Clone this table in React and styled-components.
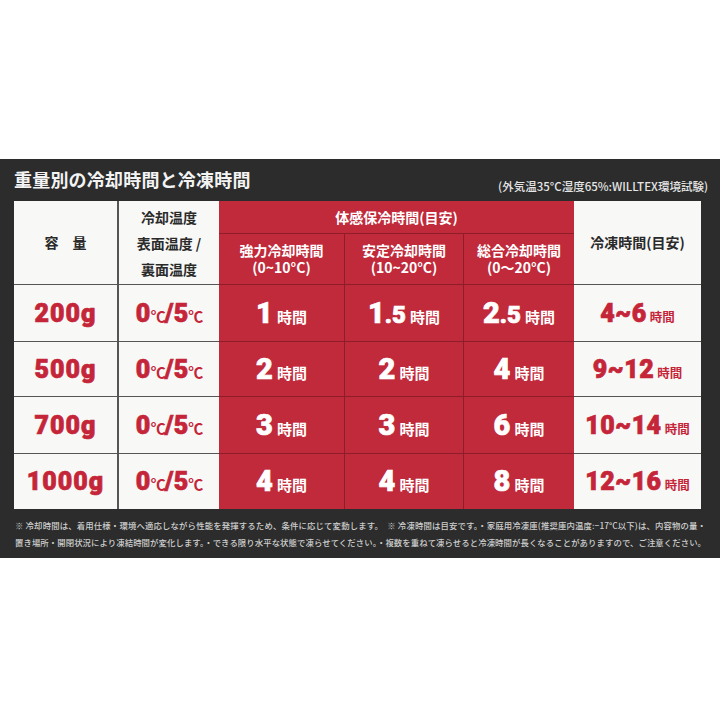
import styled, { createGlobalStyle } from 'styled-components';

const GlobalStyle = createGlobalStyle`
  html, body {
    margin: 0;
    padding: 0;
    background: #ffffff;
  }
  body {
    font-family: 'Noto Sans CJK JP', 'Noto Sans', sans-serif;
  }
`;

const RED = '#c02a3b';
const RED_LINE = '#8e1d2a';
const GRAY_LINE = '#555555';
const INK = '#2a2a2a';
const TEXT_RED = '#c52539';

const Page = styled.div`
  width: 720px;
  height: 720px;
  padding-top: 159px;
  box-sizing: border-box;
  background: #ffffff;
`;

const Panel = styled.section`
  background: #2b2c2b;
  padding: 0 14px 7px 14px;
  color: #f2f2f2;
`;

const Header = styled.div`
  display: flex;
  justify-content: space-between;
  align-items: flex-start;
  height: 42px;
  padding-top: 8px;
  box-sizing: border-box;
`;

const Title = styled.h1`
  margin: 0;
  font-size: 18px;
  line-height: 24px;
  font-weight: 700;
  letter-spacing: 0.2px;
  color: #f3f3f3;
`;

const Note = styled.div`
  margin-top: 12px;
  margin-right: -2px;
  font-size: 11.5px;
  line-height: 14px;
  font-weight: 500;
  color: #e6e6e6;
`;

const Table = styled.div`
  display: grid;
  grid-template-columns: 105px 100px 126px 119px 110px 127px;
  grid-template-rows: 33px 51px 57px 55px 57px 55px;
`;

const Cell = styled.div`
  display: flex;
  flex-direction: column;
  align-items: center;
  justify-content: center;
  box-sizing: border-box;
  text-align: center;
  background: ${p => (p.$red ? RED : '#f8f8f6')};
  color: ${p => (p.$red ? '#ffffff' : INK)};
  border-right: ${p => (p.$right ? `${p.$red ? 1 : 2}px solid ${p.$red ? RED_LINE : GRAY_LINE}` : 'none')};
  border-bottom: ${p => (p.$bottom ? `1.5px solid ${p.$red ? RED_LINE : GRAY_LINE}` : 'none')};
  grid-column: ${p => p.$col || 'auto'};
  grid-row: ${p => p.$row || 'auto'};
`;

const HeadText = styled.div`
  font-size: ${p => p.$size || 14}px;
  line-height: ${p => p.$lh || 17}px;
  font-weight: 700;
  white-space: pre;
`;

const Value = styled.div`
  display: flex;
  align-items: baseline;
  justify-content: center;
  white-space: nowrap;
  color: ${p => (p.$red ? '#ffffff' : TEXT_RED)};
`;

// digits are a heavy display face in the print; Roboto bold plus a thin stroke gets close
const Num = styled.span`
  font-family: Roboto, 'Liberation Sans', sans-serif;
  font-weight: 900;
  font-size: ${p => p.$size || 26}px;
  letter-spacing: ${p => p.$ls ?? 0.5}px;
  -webkit-text-stroke: 0.7px currentColor;
  line-height: 1;
`;

const Unit = styled.span`
  font-family: 'Noto Sans CJK JP', sans-serif;
  font-weight: 700;
  font-size: ${p => p.$size || 15}px;
  margin-left: ${p => p.$gap ?? 4}px;
  line-height: 1;
`;

const Deg = styled.span`
  font-family: 'Noto Sans CJK JP', sans-serif;
  font-weight: 700;
  font-size: 15px;
  letter-spacing: -1px;
  line-height: 1;
`;

const Footnotes = styled.div`
  padding-top: 8px;
  font-size: 8.4px;
  line-height: 17px;
  color: #cfcfcf;
  font-weight: 500;
`;

const FootLine = styled.div`
  white-space: nowrap;
  text-align: justify;
  text-align-last: justify;
  padding-left: 1px;
  overflow: hidden;
`;

const rows = [
  { weight: '200g', strong: ['1'], stable: ['1', '.5'], total: ['2', '.5'], freeze: '4~6' },
  { weight: '500g', strong: ['2'], stable: ['2'], total: ['4'], freeze: '9~12' },
  { weight: '700g', strong: ['3'], stable: ['3'], total: ['6'], freeze: '10~14' },
  { weight: '1000g', strong: ['4'], stable: ['4'], total: ['8'], freeze: '12~16' },
];

const Hours = ({ parts }) => (
  <Value $red>
    <Num $size={29} $ls={0}>{parts[0]}</Num>
    {parts[1] && <Num $size={24} $ls={0}>{parts[1]}</Num>}
    <Unit>時間</Unit>
  </Value>
);

export default function App() {
  return (
    <Page>
      <GlobalStyle />
      <Panel>
        <Header>
          <Title>重量別の冷却時間と冷凍時間</Title>
          <Note>(外気温35°C湿度65%:WILLTEX環境試験)</Note>
        </Header>

        <Table>
          <Cell $col="1" $row="1 / 3" $right $bottom>
            <HeadText>容　量</HeadText>
          </Cell>
          <Cell $col="2" $row="1 / 3" $bottom>
            <HeadText $lh={26}>{'冷却温度\n表面温度 /\n裏面温度'}</HeadText>
          </Cell>
          <Cell $col="3 / 6" $row="1" $red $bottom>
            <HeadText>体感保冷時間(目安)</HeadText>
          </Cell>
          <Cell $col="6" $row="1 / 3" $bottom>
            <HeadText>冷凍時間(目安)</HeadText>
          </Cell>
          <Cell $col="3" $row="2" $red $right $bottom>
            <HeadText>{'強力冷却時間\n(0~10°C)'}</HeadText>
          </Cell>
          <Cell $col="4" $row="2" $red $right $bottom>
            <HeadText>{'安定冷却時間\n(10~20°C)'}</HeadText>
          </Cell>
          <Cell $col="5" $row="2" $red $bottom>
            <HeadText>{'総合冷却時間\n(0～20°C)'}</HeadText>
          </Cell>

          {rows.map((r, i) => {
            const last = i === rows.length - 1;
            return [
              <Cell key={`w${i}`} $right $bottom={!last}>
                <Value><Num $size={25} $ls={1}>{r.weight}</Num></Value>
              </Cell>,
              <Cell key={`t${i}`} $bottom={!last}>
                <Value>
                  <Num $size={25}>0</Num><Deg>℃</Deg>
                  <Num $size={25} $ls={0}>/5</Num><Deg>℃</Deg>
                </Value>
              </Cell>,
              <Cell key={`a${i}`} $red $right $bottom={!last}>
                <Hours parts={r.strong} />
              </Cell>,
              <Cell key={`b${i}`} $red $right $bottom={!last}>
                <Hours parts={r.stable} />
              </Cell>,
              <Cell key={`c${i}`} $red $bottom={!last}>
                <Hours parts={r.total} />
              </Cell>,
              <Cell key={`f${i}`} $bottom={!last}>
                <Value>
                  <Num $size={25} $ls={0.5}>{r.freeze}</Num>
                  <Unit $size={12.5} $gap={3}>時間</Unit>
                </Value>
              </Cell>,
            ];
          })}
        </Table>

        <Footnotes>
          <FootLine>
            ※ 冷却時間は、着用仕様・環境へ適応しながら性能を発揮するため、条件に応じて変動します。　※ 冷凍時間は目安です。・家庭用冷凍庫(推奨庫内温度:−17°C以下)は、内容物の量・
          </FootLine>
          <FootLine>
            置き場所・開閉状況により凍結時間が変化します。・できる限り水平な状態で凍らせてください。・複数を重ねて凍らせると冷凍時間が長くなることがありますので、ご注意ください。
          </FootLine>
        </Footnotes>
      </Panel>
    </Page>
  );
}
